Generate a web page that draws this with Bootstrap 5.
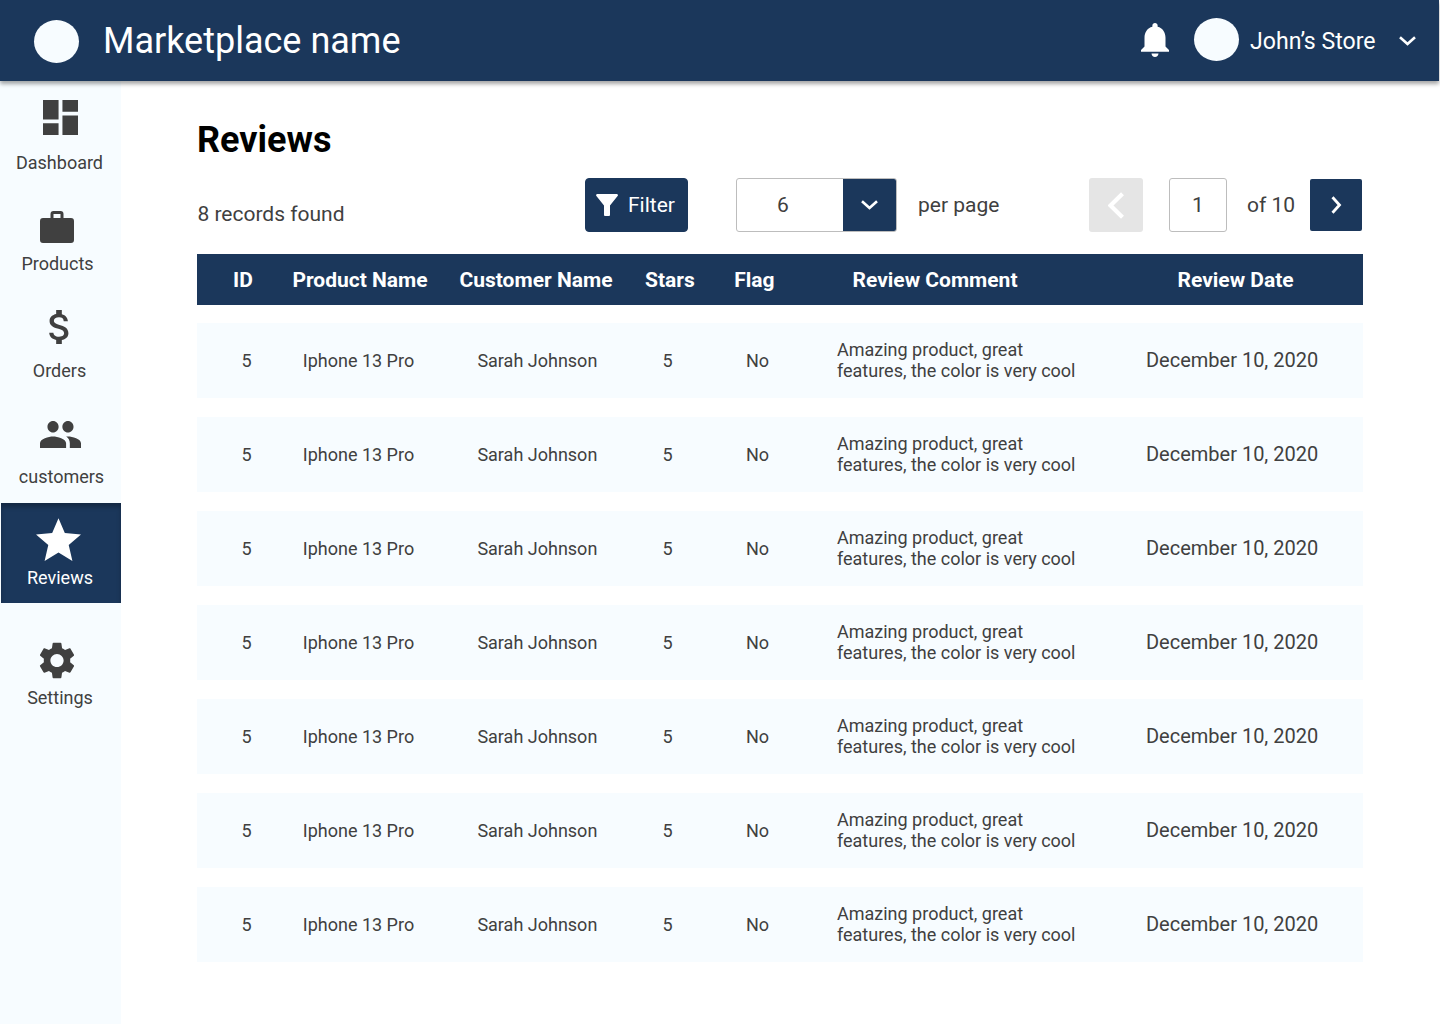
<!DOCTYPE html>
<html lang="en">
<head>
<meta charset="utf-8">
<meta name="viewport" content="width=device-width, initial-scale=1">
<title>Reviews</title>
<link rel="stylesheet" href="https://cdn.jsdelivr.net/npm/bootstrap@5.3.0/dist/css/bootstrap.min.css">
<style>
:root{--navy:#1b375b;--ice:#f7fcff;--ink:#404040}
body{font-family:Roboto,"Liberation Sans",sans-serif;color:var(--ink);height:1024px;overflow:hidden;background:#fff}
svg{display:block;flex:none;fill:currentColor}
.topbar{width:1439px;height:81px;background:var(--navy);box-shadow:0 3px 4px rgba(0,0,0,.35);z-index:2;padding:0 23px 0 34px}
.disc{width:45px;height:43px;border-radius:50%;background:var(--ice)}
.brand-disc{margin-top:2px}
.user-disc{margin:0 0 2px 25px}
.bell{margin-bottom:2px}
.brand-name{font-size:36px;line-height:42px;margin-left:24px;padding-top:1px}
.store-name{font-size:23.1px;line-height:28px;margin-left:11px;width:149px;padding-top:3px}
.side{width:121px;background:var(--ice);padding-left:1px;font-size:18px;line-height:21px;height:943px}
.side a{color:inherit;display:flex;flex-direction:column;align-items:center}
.side svg{margin-right:2px}
.side a.current{background:var(--navy);color:#fff;height:100px;padding:15px 3px 0 0;box-shadow:inset 0 4px 4px rgba(0,0,0,.25)}
.nav-dashboard{padding-top:19px}
.nav-dashboard span{margin:17px 3px 0 0}
.nav-products{padding:38px 7px 0 0}
.nav-products span{margin-top:10px}
.nav-orders{padding:36px 3px 0 0}
.side .nav-orders svg{margin-right:1px}
.nav-orders span{margin-top:16px}
.nav-customers{padding-top:40px}
.nav-customers span{margin:18px 0 16px 1px}
.current span{margin:6px 0 0 1px}
.nav-settings{padding:39px 7px 0 0}
.side .nav-settings svg{margin-right:1px}
.nav-settings span{margin:8px 0 0 5px}
.main-area{padding:38px 77px 0 76px}
.page-title{font-size:36px;line-height:42px;color:#000;height:59px}
.tools{font-size:21px;line-height:25px;height:54px}
.records{padding:18px 0 0 .4px;width:388px}
.filter-btn{--bs-btn-bg:var(--navy);--bs-btn-color:#fff;--bs-btn-border-color:var(--navy);--bs-btn-hover-bg:var(--navy);width:103px;height:54px;border-radius:4px;font-size:21px;line-height:25px;padding:0 0 0 10px}
.filter-btn span{margin-left:10px}
.box{border:1px solid #bdbdbd;border-radius:3px;background:#fff;height:54px}
.size-box{width:161px;margin-left:48px}
.size-value{width:106px;padding-right:14px}
.per-page{margin-left:21px;width:171px}
.page-box{width:58px;margin-left:26px}
.page-total{margin-left:20px;width:63px}
.navy-box{background:var(--navy);color:#fff}
.next-box{width:52px;height:52px;border-radius:2px}
.prev-box{width:54px;height:54px;background:#e5e5e5;border-radius:3px}
.grid-line{display:grid;align-items:center}
.head-line{height:51px;margin-top:22px;background:var(--navy);color:#fff;font-size:21px;line-height:25px;font-weight:700;padding:2px 0 0 36px;grid-template-columns:59.4px 167.1px 185.5px 89.3px 118.200px 325px 1fr}
.body-line{height:75px;background:var(--ice);font-size:18px;line-height:21px;padding-left:44.4px;grid-template-columns:61.4px 174.6px 185px 83.6px 91px 309px 1fr}
.comment-cell{padding-bottom:2px}
.date-cell{font-size:20px;line-height:24px;padding-bottom:2px}
.rows-stack{gap:19px;margin-top:18px}
</style>
</head>
<body>
<header class="topbar position-relative d-flex align-items-center text-white">
  <span class="disc brand-disc"></span>
  <span class="brand-name me-auto">Marketplace name</span>
  <svg class="bell" width="28" height="34" viewBox="4 2.5 16 19.5" preserveAspectRatio="none"><path d="M12 22c1.1 0 2-.9 2-2h-4c0 1.1.89 2 2 2zm6-6v-5c0-3.07-1.64-5.64-4.5-6.32V4c0-.83-.67-1.5-1.5-1.5s-1.5.67-1.5 1.5v.68C7.63 5.36 6 7.92 6 11v5l-2 2v1h16v-1l-2-2z"/></svg>
  <span class="disc user-disc"></span>
  <span class="store-name">John’s Store</span>
  <svg width="17" height="10" viewBox="0 0 17 10"><path d="M1 1.2l7.500 6.800 7.500-6.800" fill="none" stroke="currentColor" stroke-width="2.6"/></svg>
</header>
<div class="d-flex">
  <nav class="side d-flex flex-column flex-shrink-0">
    <a class="nav-dashboard text-decoration-none" href="#">
      <svg width="35" height="35" viewBox="3 3 18 18"><path d="M3 13h8V3H3v10zm0 8h8v-6H3v6zm10 0h8V11h-8v10zm0-18v6h8V3h-8z"/></svg>
      <span>Dashboard</span></a>
    <a class="nav-products text-decoration-none" href="#">
      <svg width="34" height="32" viewBox="0 0 34 32"><path fill-rule="evenodd" d="M3 7h7.500V3q0-3 3-3h7q3 0 3 3v4H31q3 0 3 3v19q0 3-3 3H3q-3 0-3-3V10q0-3 3-3zM13.500 7h7V3h-7z"/></svg>
      <span>Products</span></a>
    <a class="nav-orders text-decoration-none" href="#">
      <svg width="20" height="34" viewBox="6.200 3 10.600 18" preserveAspectRatio="none"><path d="M11.800 10.900c-2.270-.59-3-1.200-3-2.150 0-1.090 1.010-1.850 2.700-1.850 1.780 0 2.440.85 2.500 2.100h2.210c-.07-1.720-1.120-3.300-3.210-3.810V3h-3v2.160c-1.940.42-3.500 1.680-3.500 3.610 0 2.310 1.910 3.460 4.700 4.130 2.500.6 3 1.480 3 2.410 0 .69-.49 1.790-2.700 1.790-2.060 0-2.870-.92-2.980-2.100h-2.200c.12 2.190 1.760 3.420 3.680 3.830V21h3v-2.150c1.950-.37 3.500-1.500 3.500-3.550 0-2.840-2.430-3.810-4.700-4.400z"/></svg>
      <span>Orders</span></a>
    <a class="nav-customers text-decoration-none" href="#">
      <svg width="41" height="27" viewBox="1 5 22 14" preserveAspectRatio="none"><path d="M16 11c1.660 0 2.990-1.340 2.990-3S17.660 5 16 5c-1.660 0-3 1.340-3 3s1.340 3 3 3zm-8 0c1.660 0 2.990-1.340 2.990-3S9.660 5 8 5C6.340 5 5 6.340 5 8s1.340 3 3 3zm0 2c-2.330 0-7 1.170-7 3.500V19h14v-2.500c0-2.330-4.670-3.500-7-3.500zm8 0c-.29 0-.62.02-.97.05 1.160.84 1.970 1.970 1.970 3.450V19h6v-2.500c0-2.330-4.670-3.500-7-3.500z"/></svg>
      <span>customers</span></a>
    <a class="current text-decoration-none" href="#">
      <svg width="45" height="43" viewBox="2 2 20 19"><path d="M12 17.270L18.180 21l-1.640-7.030L22 9.240l-7.190-.61L12 2 9.190 8.630 2 9.240l5.460 4.730L5.820 21z"/></svg>
      <span>Reviews</span></a>
    <a class="nav-settings text-decoration-none" href="#">
      <svg width="36" height="37" viewBox="2.200 2 19.600 20"><path d="M19.140 12.940c.04-.3.06-.61.06-.94 0-.32-.02-.64-.07-.94l2.030-1.580c.18-.14.23-.41.12-.61l-1.920-3.320c-.12-.22-.37-.29-.59-.22l-2.390.96c-.5-.38-1.030-.7-1.620-.94l-.36-2.540c-.04-.24-.24-.41-.48-.41h-3.840c-.24 0-.43.17-.47.41l-.36 2.540c-.59.24-1.130.57-1.620.94l-2.390-.96c-.22-.08-.47 0-.59.22L2.740 8.870c-.12.21-.08.47.12.61l2.030 1.580c-.05.3-.09.63-.09.94s.02.64.07.94l-2.030 1.580c-.18.14-.23.41-.12.61l1.920 3.320c.12.22.37.29.59.22l2.390-.96c.5.38 1.030.7 1.620.94l.36 2.540c.05.24.24.41.48.41h3.840c.24 0 .44-.17.47-.41l.36-2.540c.59-.24 1.130-.56 1.620-.94l2.390.96c.22.08.47 0 .59-.22l1.920-3.320c.12-.22.07-.47-.12-.61l-2.010-1.580zM12 15.600c-1.980 0-3.600-1.620-3.600-3.600s1.620-3.600 3.600-3.600 3.600 1.620 3.600 3.600-1.620 3.600-3.600 3.600z"/></svg>
      <span>Settings</span></a>
  </nav>
  <main class="main-area flex-grow-1">
    <h1 class="page-title fw-bold mb-0">Reviews</h1>
    <div class="tools d-flex align-items-center">
      <div class="records">8 records found</div>
      <button class="btn filter-btn d-flex align-items-center" type="button">
        <svg width="22" height="22" viewBox="0 0 22 22"><path d="M1 0h20q1.500.8.600 2L14 11.500V21q0 1-1 1H9q-1 0-1-1V11.500L.4 2Q-.4.8 1 0z"/></svg>
        <span>Filter</span></button>
      <div class="box size-box d-flex overflow-hidden">
        <span class="size-value d-flex align-items-center justify-content-center">6</span>
        <span class="navy-box flex-grow-1 d-flex align-items-center justify-content-center"><svg width="17" height="10" viewBox="0 0 17 10"><path d="M1 1.200l7.500 6.800 7.500-6.800" fill="none" stroke="currentColor" stroke-width="2.600"/></svg></span>
      </div>
      <span class="per-page">per page</span>
      <span class="prev-box d-flex align-items-center justify-content-center text-white"><svg width="16" height="27" viewBox="0 0 16 27"><path d="M14.500 1.800L2.500 13.500l12 11.700" fill="none" stroke="currentColor" stroke-width="4.200"/></svg></span>
      <span class="box page-box d-flex align-items-center justify-content-center">1</span>
      <span class="page-total">of 10</span>
      <span class="navy-box next-box d-flex align-items-center justify-content-center"><svg width="11" height="18" viewBox="0 0 11 18"><path d="M1.500 1.300l7 7.700-7 7.700" fill="none" stroke="currentColor" stroke-width="2.800"/></svg></span>
    </div>
    <div role="table">
      <div class="grid-line head-line" role="row">
        <span>ID</span><span>Product Name</span><span>Customer Name</span><span>Stars</span><span>Flag</span><span>Review Comment</span><span>Review Date</span>
      </div>
      <div class="rows-stack d-flex flex-column">
        <div class="grid-line body-line" role="row"><span>5</span><span>Iphone 13 Pro</span><span>Sarah Johnson</span><span>5</span><span>No</span><span class="comment-cell">Amazing product, great<br>features, the color is very cool</span><span class="date-cell">December 10, 2020</span></div>
        <div class="grid-line body-line" role="row"><span>5</span><span>Iphone 13 Pro</span><span>Sarah Johnson</span><span>5</span><span>No</span><span class="comment-cell">Amazing product, great<br>features, the color is very cool</span><span class="date-cell">December 10, 2020</span></div>
        <div class="grid-line body-line" role="row"><span>5</span><span>Iphone 13 Pro</span><span>Sarah Johnson</span><span>5</span><span>No</span><span class="comment-cell">Amazing product, great<br>features, the color is very cool</span><span class="date-cell">December 10, 2020</span></div>
        <div class="grid-line body-line" role="row"><span>5</span><span>Iphone 13 Pro</span><span>Sarah Johnson</span><span>5</span><span>No</span><span class="comment-cell">Amazing product, great<br>features, the color is very cool</span><span class="date-cell">December 10, 2020</span></div>
        <div class="grid-line body-line" role="row"><span>5</span><span>Iphone 13 Pro</span><span>Sarah Johnson</span><span>5</span><span>No</span><span class="comment-cell">Amazing product, great<br>features, the color is very cool</span><span class="date-cell">December 10, 2020</span></div>
        <div class="grid-line body-line" role="row"><span>5</span><span>Iphone 13 Pro</span><span>Sarah Johnson</span><span>5</span><span>No</span><span class="comment-cell">Amazing product, great<br>features, the color is very cool</span><span class="date-cell">December 10, 2020</span></div>
        <div class="grid-line body-line" role="row"><span>5</span><span>Iphone 13 Pro</span><span>Sarah Johnson</span><span>5</span><span>No</span><span class="comment-cell">Amazing product, great<br>features, the color is very cool</span><span class="date-cell">December 10, 2020</span></div>
      </div>
    </div>
  </main>
</div>
<script src="https://cdn.jsdelivr.net/npm/bootstrap@5.3.0/dist/js/bootstrap.bundle.min.js"></script>
</body>
</html>
